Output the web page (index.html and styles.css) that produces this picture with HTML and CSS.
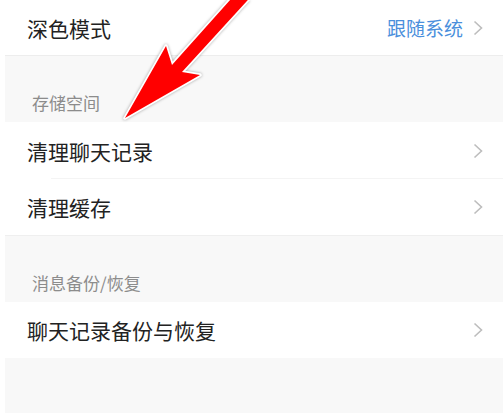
FILE: index.html
```html
<!DOCTYPE html>
<html lang="zh-CN">
<head>
    <meta charset="UTF-8">
    <meta name="viewport" content="width=device-width, initial-scale=1.0">
    <title>设置</title>
    <link rel="stylesheet" href="styles.css">
</head>
<body>
    <div class="settings">
        <div class="row row-top">
            <span class="title">深色模式</span>
            <div class="right">
                <span class="value">跟随系统</span>
                <svg class="chevron" viewBox="0 0 10 16"><path d="M1.5 1.5 L8.5 8 L1.5 14.5"/></svg>
            </div>
        </div>

        <div class="section-head">存储空间</div>
        <div class="row row-inset">
            <span class="title">清理聊天记录</span>
            <svg class="chevron" viewBox="0 0 10 16"><path d="M1.5 1.5 L8.5 8 L1.5 14.5"/></svg>
        </div>
        <div class="row row-last">
            <span class="title">清理缓存</span>
            <svg class="chevron" viewBox="0 0 10 16"><path d="M1.5 1.5 L8.5 8 L1.5 14.5"/></svg>
        </div>

        <div class="section-head">消息备份/恢复</div>
        <div class="row">
            <span class="title">聊天记录备份与恢复</span>
            <svg class="chevron" viewBox="0 0 10 16"><path d="M1.5 1.5 L8.5 8 L1.5 14.5"/></svg>
        </div>

        <div class="filler"></div>
    </div>

    <!-- red arrow pasted over the screenshot -->
    <svg class="arrow" viewBox="0 0 503 413">
        <polygon points="239,-10 172,65 166,46 125,118 200,75 182,72 257,-10"/>
    </svg>
</body>
</html>
```

FILE: styles.css
```css
body {
    margin: 0;
    background: #fff;
    font-family: "Noto Sans CJK SC", "Noto Sans", sans-serif;
    width: 503px;
    height: 413px;
    overflow: hidden;
    position: relative;
}
.settings {
    padding-left: 5px;
    display: flex;
    flex-direction: column;
}
.row {
    height: 56px;
    background: #fff;
    display: flex;
    align-items: center;
    justify-content: space-between;
    padding: 0 20px 0 22px;
    position: relative;
}
.row-top {
    height: 55px;
    border-bottom: 1px solid #ededed;
}
.row-inset {
    height: 57px;
}
/* thin divider that starts under the text, not at the edge */
.row-inset::after {
    content: "";
    position: absolute;
    left: 46px;
    right: 0;
    bottom: 0;
    height: 1px;
    background: #f4f4f4;
}
.row-last {
    border-bottom: 1px solid #efefef;
}
.title {
    font-size: 21px;
    color: #222;
    line-height: 24px;
}
.right {
    display: flex;
    align-items: center;
}
.value {
    font-size: 19px;
    color: #4a8fdc;
    line-height: 24px;
    margin-right: 10px;
}
.chevron {
    width: 10px;
    height: 16px;
    fill: none;
    stroke: #bdbdbd;
    stroke-width: 1.6;
}
.section-head {
    height: 66px;
    background: #f8f8f8;
    display: flex;
    align-items: flex-end;
    padding: 0 0 7px 27px;
    box-sizing: border-box;
    font-size: 17px;
    line-height: 24px;
    color: #8c8c8c;
}
.filler {
    height: 60px;
    background: #f8f8f8;
}
.arrow {
    position: absolute;
    left: 0;
    top: 0;
    width: 503px;
    height: 413px;
    pointer-events: none;
    filter: drop-shadow(0 0 1.5px rgba(0, 0, 0, 0.35));
}
.arrow polygon {
    fill: #f00;
    stroke: #fff;
    stroke-width: 3.5;
    stroke-linejoin: round;
    paint-order: stroke;
}
```
